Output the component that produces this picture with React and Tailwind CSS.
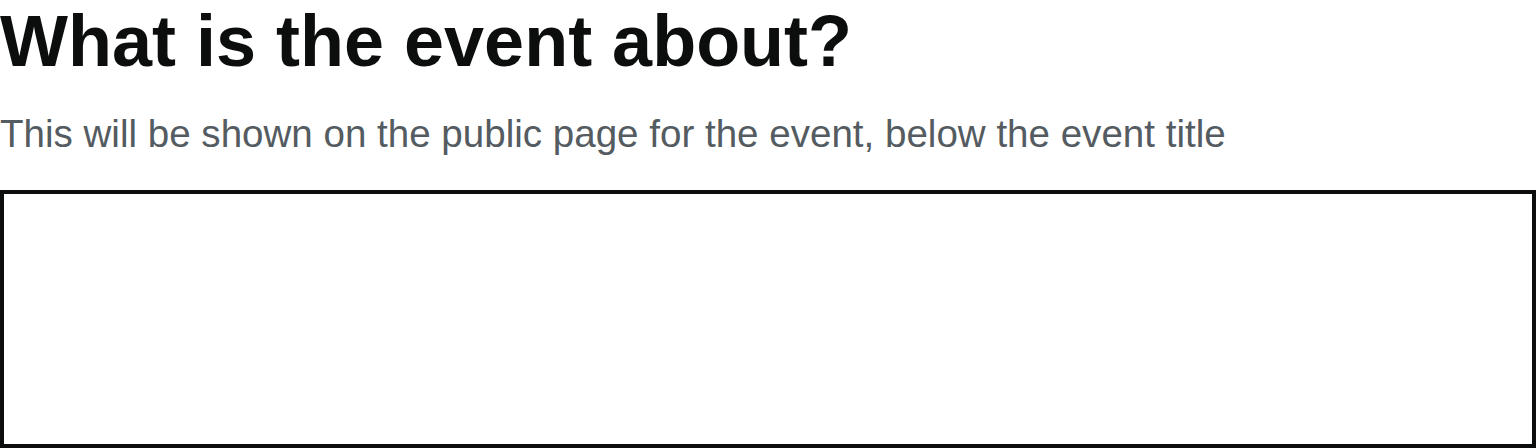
import React from "react";

export default function App() {
  return (
    <div className="font-['Liberation_Sans',Arial,sans-serif] bg-white">
      <h1 className="text-[72px] leading-[normal] font-bold text-[#0c0e0d]">
        What is the event about?
      </h1>
      <p className="mt-[30px] text-[38.55px] leading-[normal] text-[#545b61]">
        This will be shown on the public page for the event, below the event title
      </p>
      <textarea
        aria-label="Event description"
        className="mt-[34px] block w-full h-[258px] border-4 border-[#0c0e0d] bg-white resize-none focus:outline-none"
      />
    </div>
  );
}
